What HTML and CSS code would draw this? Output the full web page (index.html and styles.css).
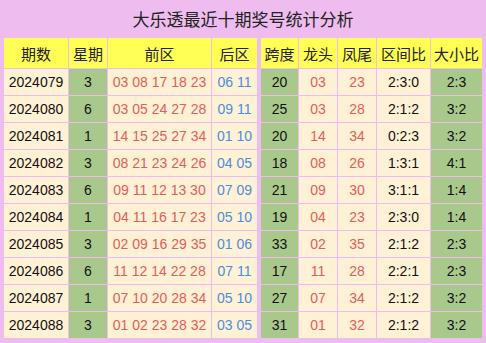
FILE: index.html
```html
<!DOCTYPE html>
<html lang="zh">
<head>
<meta charset="utf-8">
<title>大乐透最近十期奖号统计分析</title>
<link rel="stylesheet" href="styles.css">
</head>
<body>
<div class="panel">
  <div class="title">大乐透最近十期奖号统计分析</div>
  <table class="stats">
    <colgroup>
      <col class="c-qs"><col class="c-xq"><col class="c-qq"><col class="c-hq"><col class="c-gap">
      <col class="c-kd"><col class="c-lt"><col class="c-fw"><col class="c-qj"><col class="c-dx">
    </colgroup>
    <thead>
      <tr><th>期数</th><th>星期</th><th>前区</th><th>后区</th><th class="gap"></th><th>跨度</th><th>龙头</th><th>凤尾</th><th>区间比</th><th>大小比</th></tr>
    </thead>
    <tbody>
      <tr><td>2024079</td><td class="g">3</td><td class="r">03 08 17 18 23</td><td class="b">06 11</td><td class="gap"></td><td class="g">20</td><td class="r">03</td><td class="r">23</td><td>2:3:0</td><td class="g">2:3</td></tr>
      <tr><td>2024080</td><td class="g">6</td><td class="r">03 05 24 27 28</td><td class="b">09 11</td><td class="gap"></td><td class="g">25</td><td class="r">03</td><td class="r">28</td><td>2:1:2</td><td class="g">3:2</td></tr>
      <tr><td>2024081</td><td class="g">1</td><td class="r">14 15 25 27 34</td><td class="b">01 10</td><td class="gap"></td><td class="g">20</td><td class="r">14</td><td class="r">34</td><td>0:2:3</td><td class="g">3:2</td></tr>
      <tr><td>2024082</td><td class="g">3</td><td class="r">08 21 23 24 26</td><td class="b">04 05</td><td class="gap"></td><td class="g">18</td><td class="r">08</td><td class="r">26</td><td>1:3:1</td><td class="g">4:1</td></tr>
      <tr><td>2024083</td><td class="g">6</td><td class="r">09 11 12 13 30</td><td class="b">07 09</td><td class="gap"></td><td class="g">21</td><td class="r">09</td><td class="r">30</td><td>3:1:1</td><td class="g">1:4</td></tr>
      <tr><td>2024084</td><td class="g">1</td><td class="r">04 11 16 17 23</td><td class="b">05 10</td><td class="gap"></td><td class="g">19</td><td class="r">04</td><td class="r">23</td><td>2:3:0</td><td class="g">1:4</td></tr>
      <tr><td>2024085</td><td class="g">3</td><td class="r">02 09 16 29 35</td><td class="b">01 06</td><td class="gap"></td><td class="g">33</td><td class="r">02</td><td class="r">35</td><td>2:1:2</td><td class="g">2:3</td></tr>
      <tr><td>2024086</td><td class="g">6</td><td class="r">11 12 14 22 28</td><td class="b">07 11</td><td class="gap"></td><td class="g">17</td><td class="r">11</td><td class="r">28</td><td>2:2:1</td><td class="g">2:3</td></tr>
      <tr><td>2024087</td><td class="g">1</td><td class="r">07 10 20 28 34</td><td class="b">05 10</td><td class="gap"></td><td class="g">27</td><td class="r">07</td><td class="r">34</td><td>2:1:2</td><td class="g">3:2</td></tr>
      <tr><td>2024088</td><td class="g">3</td><td class="r">01 02 23 28 32</td><td class="b">03 05</td><td class="gap"></td><td class="g">31</td><td class="r">01</td><td class="r">32</td><td>2:1:2</td><td class="g">3:2</td></tr>
    </tbody>
  </table>
</div>
</body>
</html>
```

FILE: styles.css
```css
html, body {
  margin: 0;
  padding: 0;
  background: #efbcef;
}
body {
  width: 486px;
  height: 343px;
  overflow: hidden;
  font-family: "Liberation Sans", "Noto Sans CJK SC", sans-serif;
  color: #111;
}
.panel {
  background: #efbcef;
  padding: 0 3px 3px 3px;
}
.title {
  height: 38px;
  line-height: 38px;
  text-align: center;
  font-family: "Noto Sans CJK SC", sans-serif;
  font-size: 17px;
  color: #222;
}
.stats {
  table-layout: fixed;
  width: 480px;
  border-collapse: separate;
  border-spacing: 1px;
  margin: -1px 0 0 0;
}
.c-qs { width: 64px; }
.c-xq { width: 38px; }
.c-qq { width: 103px; }
.c-hq { width: 45px; }
.c-gap { width: 2px; }
.c-kd { width: 37px; }
.c-lt { width: 38px; }
.c-fw { width: 38px; }
.c-qj { width: 53px; }
.c-dx { width: 51px; }
.stats th, .stats td {
  padding: 0;
  text-align: center;
  white-space: nowrap;
  overflow: hidden;
}
.stats th {
  height: 30px;
  background: #ffff55;
  font-family: "Noto Sans CJK SC", sans-serif;
  font-weight: normal;
  font-size: 15px;
  color: #222;
}
.stats td {
  height: 26px;
  background: #fff1d6;
  font-size: 14px;
}
.stats .gap {
  background: transparent;
}
.stats td.g {
  background: #a9c98c;
}
.stats td.r {
  color: #e06058;
}
.stats td.b {
  color: #4a8ede;
}
```
